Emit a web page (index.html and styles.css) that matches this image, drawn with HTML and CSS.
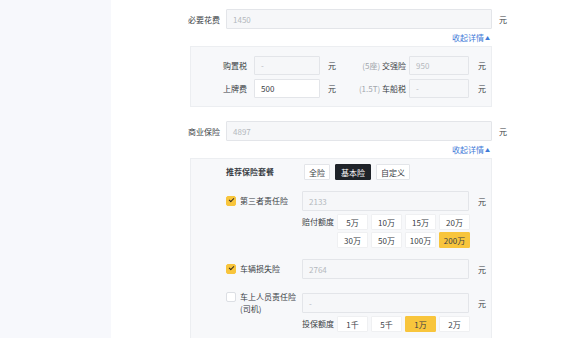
FILE: index.html
```html
<!DOCTYPE html>
<html lang="zh-CN">
<head>
  <meta charset="UTF-8" />
  <title>保险费用</title>
  <link rel="stylesheet" href="styles.css">
</head>
<body>
  <div class="sidebar"></div>

  <div class="main">
    <!-- 必要花费 -->
    <div class="row">
      <div class="row-label">必要花费</div>
      <div class="input disabled">1450</div>
      <div class="unit">元</div>
    </div>
    <div class="toggle"><span>收起详情</span><span class="arrow">▲</span></div>

    <div class="panel panel-fees">
      <div class="fee-row">
        <div class="fee-label">购置税</div>
        <div class="input disabled small">-</div>
        <div class="fee-unit">元</div>
        <div class="fee-label2"><span class="hint">(5座)</span> 交强险</div>
        <div class="input disabled small2">950</div>
        <div class="fee-unit2">元</div>
      </div>
      <div class="fee-row">
        <div class="fee-label">上牌费</div>
        <div class="input small">500</div>
        <div class="fee-unit">元</div>
        <div class="fee-label2"><span class="hint">(1.5T)</span> 车船税</div>
        <div class="input disabled small2">-</div>
        <div class="fee-unit2">元</div>
      </div>
    </div>

    <!-- 商业保险 -->
    <div class="row row-second">
      <div class="row-label">商业保险</div>
      <div class="input disabled">4897</div>
      <div class="unit">元</div>
    </div>
    <div class="toggle"><span>收起详情</span><span class="arrow">▲</span></div>

    <div class="panel panel-ins">
      <div class="ins-row">
        <div class="ins-label bold">推荐保险套餐</div>
        <div class="pkg-group">
          <button class="pkg">全险</button>
          <button class="pkg active">基本险</button>
          <button class="pkg">自定义</button>
        </div>
      </div>

      <div class="ins-row item">
        <label class="ins-label check"><span class="box on"></span>第三者责任险</label>
        <div class="input disabled mid">2133</div>
        <div class="fee-unit2">元</div>
      </div>
      <div class="amount">
        <div class="amount-label">赔付额度</div>
        <div class="amount-grid">
          <button class="amt">5万</button>
          <button class="amt">10万</button>
          <button class="amt">15万</button>
          <button class="amt">20万</button>
          <button class="amt">30万</button>
          <button class="amt">50万</button>
          <button class="amt">100万</button>
          <button class="amt active">200万</button>
        </div>
      </div>

      <div class="ins-row item">
        <label class="ins-label check"><span class="box on"></span>车辆损失险</label>
        <div class="input disabled mid">2764</div>
        <div class="fee-unit2">元</div>
      </div>

      <div class="ins-row item item-tall">
        <label class="ins-label check"><span class="box"></span>车上人员责任险<br>(司机)</label>
        <div class="input disabled mid">-</div>
        <div class="fee-unit2">元</div>
      </div>
      <div class="amount amount-tight">
        <div class="amount-label">投保额度</div>
        <div class="amount-grid">
          <button class="amt">1千</button>
          <button class="amt">5千</button>
          <button class="amt active">1万</button>
          <button class="amt">2万</button>
        </div>
      </div>
    </div>
  </div>
</body>
</html>
```
FILE: styles.css
```css
:root {
  --text: #3a3e45;
  --muted: #b4b7bd;
  --line: #e3e5e9;
  --panel: #f7f8fa;
  --blue: #3f7bd8;
  --yellow: #f8c53c;
}

body {
  margin: 0;
  display: flex;
  font-family: 'Noto Sans CJK SC', 'Noto Sans', sans-serif;
  font-size: 8px;
  color: var(--text);
  background: #fff;
  height: 338px;
  overflow: hidden;
}

.sidebar {
  width: 111px;
  flex-shrink: 0;
  background: #f7f8fc;
}

.main {
  flex: 1;
  padding-top: 9px;
}

.row {
  display: flex;
  align-items: center;
  height: 20px;
}

.row-second {
  margin-top: 14px;
}

.row-label {
  width: 109px;
  padding-right: 6px;
  text-align: right;
}

.input {
  box-sizing: border-box;
  height: 20px;
  width: 266px;
  border: 1px solid var(--line);
  border-radius: 1px;
  background: #fff;
  padding: 0 6px;
  display: flex;
  align-items: center;
  color: var(--text);
}

.input.disabled {
  background: #f6f7f9;
  color: var(--muted);
}

.unit {
  margin-left: 7px;
}

.toggle {
  margin-left: 115px;
  width: 264px;
  height: 17px;
  line-height: 17px;
  text-align: right;
  color: var(--blue);
}

.arrow {
  font-size: 5px;
  margin-left: 1px;
  vertical-align: 1px;
}

.panel {
  margin-left: 79px;
  width: 302px;
  box-sizing: border-box;
  background: var(--panel);
  border: 1px solid #eceef1;
}

.panel-fees {
  padding: 9px 0 8px;
  display: flex;
  flex-direction: column;
  gap: 4px;
}

.fee-row {
  display: flex;
  align-items: center;
}

.fee-label {
  width: 56px;
  padding-right: 7px;
  text-align: right;
}

.input.small {
  width: 66px;
  height: 19px;
}

.fee-unit {
  width: 30px;
  padding-left: 8px;
  box-sizing: border-box;
}

.fee-label2 {
  width: 56px;
  padding-right: 3px;
  text-align: right;
}

.hint {
  color: #a3a7ad;
}

.input.small2 {
  width: 60px;
  height: 19px;
}

.fee-unit2 {
  margin-left: 9px;
}

.panel-ins {
  padding: 5px 0 20px 35px;
}

.ins-row {
  display: flex;
  align-items: center;
}

.ins-row.item {
  margin-top: 11px;
}

.ins-row.item-tall {
  margin-top: 12px;
}

.ins-label {
  width: 76px;
  flex-shrink: 0;
  line-height: 12px;
}

.bold {
  font-weight: 700;
}

.check {
  position: relative;
  padding-left: 14px;
  box-sizing: border-box;
}

.box {
  position: absolute;
  left: 0;
  top: 1px;
  width: 10px;
  height: 10px;
  box-sizing: border-box;
  border: 1px solid #dcdfe4;
  border-radius: 2px;
  background: #fff;
}

.box.on {
  background: var(--yellow);
  border-color: var(--yellow);
}

.box.on::after {
  content: "";
  position: absolute;
  left: 2px;
  top: 1px;
  width: 4px;
  height: 2px;
  border-left: 1.3px solid #3a3020;
  border-bottom: 1.3px solid #3a3020;
  transform: rotate(-45deg);
}

.pkg-group {
  display: flex;
  gap: 5px;
  margin-left: 2px;
}

button {
  font-family: inherit;
  font-size: 8px;
  color: var(--text);
  cursor: pointer;
}

.pkg {
  height: 16px;
  padding: 0 4px;
  border: 1px solid var(--line);
  border-radius: 1px;
  background: #fff;
}

.pkg.active {
  background: #1f2329;
  border-color: #1f2329;
  color: #fff;
  padding: 0 5px;
}

.input.mid {
  width: 167px;
}

.amount {
  display: flex;
  align-items: flex-start;
  margin-top: 3px;
  margin-left: 76px;
}

.amount-tight {
  margin-top: 1px;
}

.amount-label {
  width: 35px;
  line-height: 16px;
}

.amount-grid {
  display: grid;
  grid-template-columns: repeat(4, 31px);
  gap: 2px 3px;
}

.amt {
  height: 16px;
  padding: 0;
  border: 1px solid #eff0f2;
  border-radius: 1px;
  background: #fff;
}

.amt.active {
  background: var(--yellow);
  border-color: var(--yellow);
}
```
